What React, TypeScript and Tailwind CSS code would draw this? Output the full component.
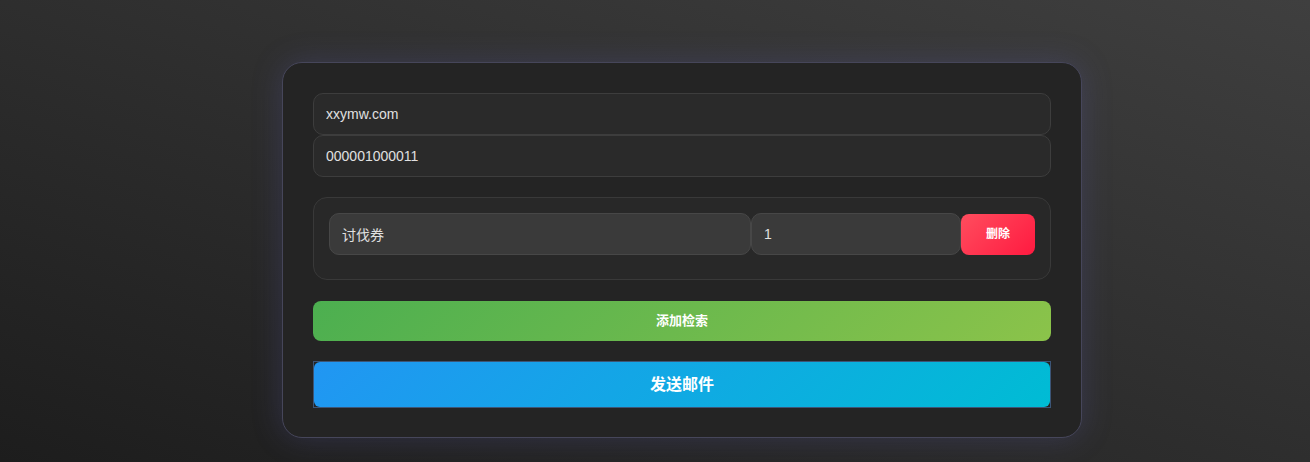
import { useState } from "react";

interface Item {
  id: number;
  name: string;
  qty: string;
}

const FONT = "font-['Liberation_Sans','Noto_Sans_CJK_SC',sans-serif]";

export default function App() {
  const [domain, setDomain] = useState("xxymw.com");
  const [code, setCode] = useState("000001000011");
  const [items, setItems] = useState<Item[]>([{ id: 1, name: "讨伐券", qty: "1" }]);

  const update = (id: number, patch: Partial<Item>) =>
    setItems(items.map((it) => (it.id === id ? { ...it, ...patch } : it)));

  return (
    <div
      className={`min-h-[462px] w-full bg-[linear-gradient(to_top_right,#1d1d1d,#3f3f3f)] pl-[54px] pt-[62px] ${FONT}`}
    >
      <div className="mx-auto w-[800px] rounded-[20px] border border-[#46465a] bg-[#242424] px-[30px] pb-[29px] pt-[30px] shadow-[0_0_30px_rgba(90,90,170,0.28)]">
        {/* Account fields */}
        <div className="flex flex-col">
          <input
            value={domain}
            onChange={(e) => setDomain(e.target.value)}
            className="h-[42px] w-full rounded-[10px] border border-[#3d3d3d] bg-[#2a2a2a] px-[12px] text-[14px] text-[#e0e0e0] outline-none"
          />
          <input
            value={code}
            onChange={(e) => setCode(e.target.value)}
            className="h-[42px] w-full rounded-[10px] border border-[#3d3d3d] bg-[#2a2a2a] px-[12px] text-[14px] text-[#e0e0e0] outline-none"
          />
        </div>

        {/* Items */}
        <div className="mt-[20px] flex flex-col gap-[10px]">
          {items.map((it) => (
            <div
              key={it.id}
              className="rounded-[14px] border border-[#393939] bg-[#282828] px-[15px] pb-[24px] pt-[15px]"
            >
              <div className="flex items-center">
                <input
                  value={it.name}
                  onChange={(e) => update(it.id, { name: e.target.value })}
                  className="h-[42px] w-[422px] rounded-[10px] border border-[#474747] bg-[#3a3a3a] px-[12px] text-[14px] text-[#e0e0e0] outline-none"
                />
                <input
                  value={it.qty}
                  onChange={(e) => update(it.id, { qty: e.target.value })}
                  className="h-[42px] w-[210px] rounded-[10px] border border-[#474747] bg-[#3a3a3a] px-[12px] text-[14px] text-[#e0e0e0] outline-none"
                />
                <button
                  onClick={() => setItems(items.filter((x) => x.id !== it.id))}
                  className="h-[41px] w-[74px] rounded-[8px] bg-[linear-gradient(135deg,#ff4d5e,#ff1a40)] text-[12px] font-bold text-white"
                >
                  删除
                </button>
              </div>
            </div>
          ))}
        </div>

        <button
          onClick={() => setItems([...items, { id: Date.now(), name: "", qty: "1" }])}
          className="mt-[21px] h-[40px] w-full rounded-[8px] bg-[linear-gradient(135deg,#4caf50,#8bc34a)] text-[13px] font-bold text-white"
        >
          添加检索
        </button>

        {/* Send */}
        <div className="mt-[20px] border border-[#3c5577]">
          <button className="block h-[45px] w-full rounded-[6px] bg-[linear-gradient(135deg,#2196f3,#00bcd4)] text-[16px] font-bold text-white">
            发送邮件
          </button>
        </div>
      </div>
    </div>
  );
}
